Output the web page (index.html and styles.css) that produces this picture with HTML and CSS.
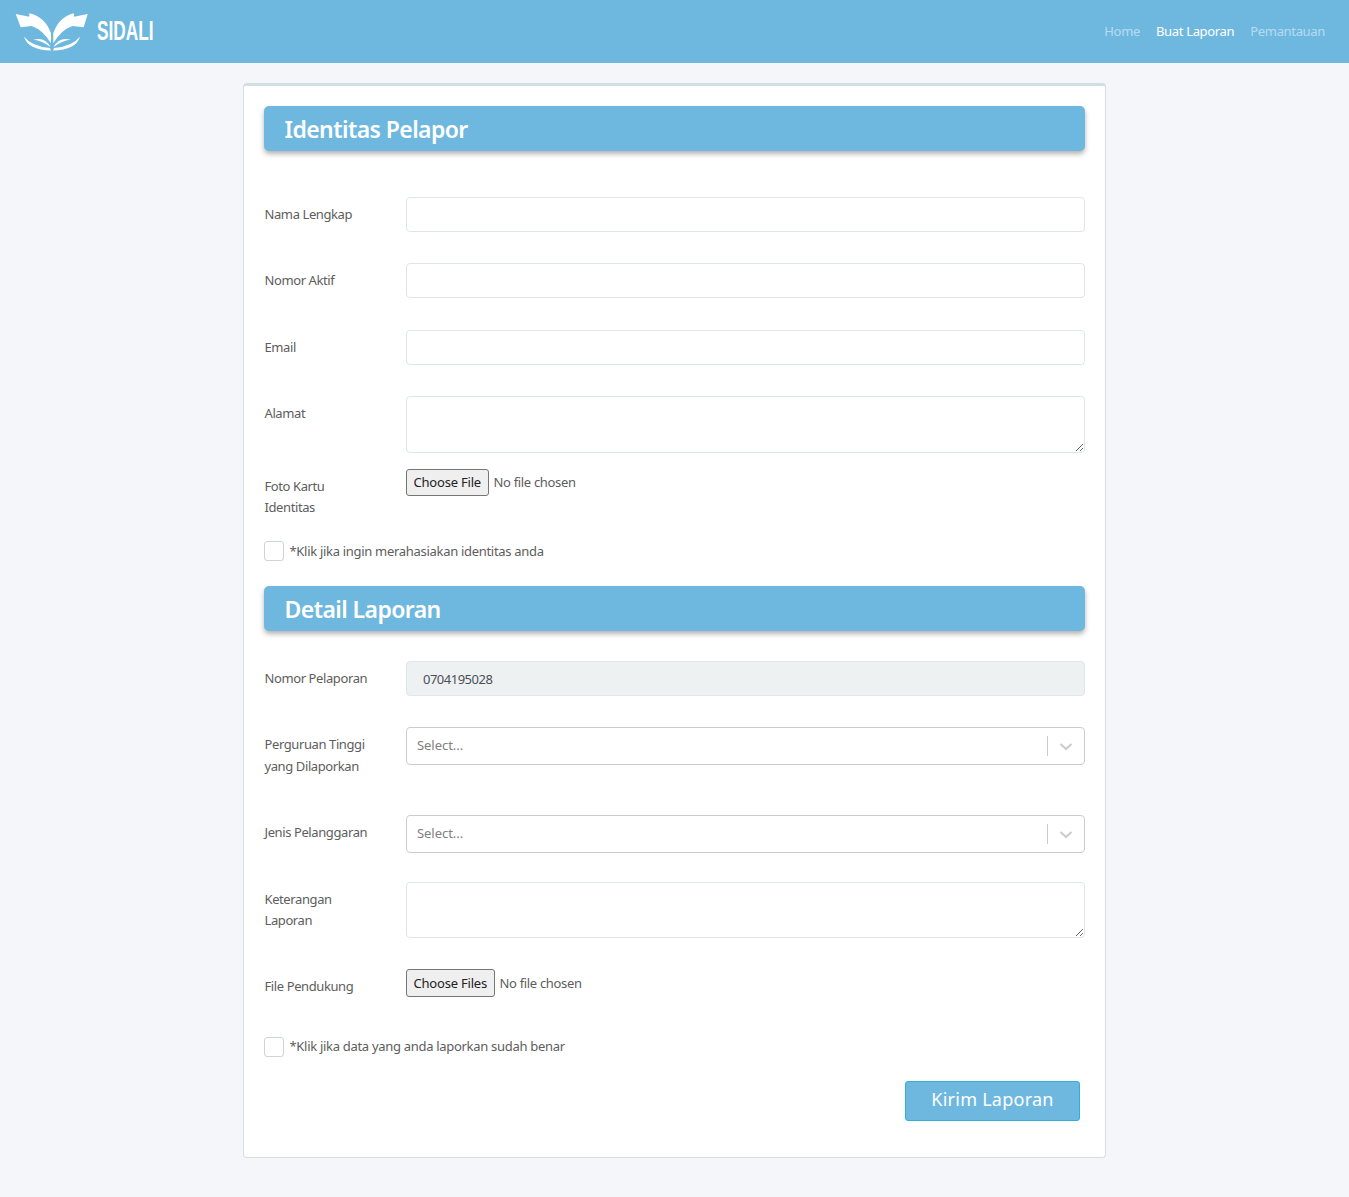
FILE: index.html
```html
<!DOCTYPE html>
<html lang="id">
<head>
<meta charset="utf-8">
<title>SIDALI</title>
<link rel="stylesheet" href="styles.css">
</head>
<body>
<nav class="navbar">
  <a class="brand" href="#">
    <svg class="logo" width="75" height="40" viewBox="0 0 75 40" aria-hidden="true">
      <g fill="#fff">
        <path d="M.7 2 L14.3 4.7 L14.3 1.3 Q30 4.7 36 21.3 L36 31.3 Q28 18 16.7 14 L5.7 15.3 Z"/>
        <path d="M72.7 2 L59 4.7 L59 1.3 Q44 4.7 38.3 21.3 L38.3 31.3 Q46 18 57.5 14 L68.7 15.3 Z"/>
        <path d="M9 24.7 Q17 34.5 35 36 L36 38.4 Q13 38 9 24.7 Z"/>
        <path d="M18.3 27.6 Q30 24.5 35.5 35 Q27 29 18.3 27.6 Z"/>
        <path d="M65 24.7 Q57 34.5 39 36 L38 38.4 Q61 38 65 24.7 Z"/>
        <path d="M55.7 27.6 Q44 24.5 38.5 35 Q47 29 55.7 27.6 Z"/>
      </g>
    </svg>
    <span class="brand-name">SIDALI</span>
  </a>
  <ul class="nav-links">
    <li><a class="nav-link" href="#">Home</a></li>
    <li><a class="nav-link active" href="#">Buat Laporan</a></li>
    <li><a class="nav-link" href="#">Pemantauan</a></li>
  </ul>
</nav>
<main class="page">
  <form class="card">
    <h2 class="section-title first">Identitas Pelapor</h2>
    <div class="row r-input"><label class="label">Nama Lengkap</label><input class="control" type="text"></div>
    <div class="row r-input"><label class="label">Nomor Aktif</label><input class="control" type="text"></div>
    <div class="row r-input"><label class="label">Email</label><input class="control" type="text"></div>
    <div class="row r-area"><label class="label">Alamat</label><textarea class="control area"></textarea></div>
    <div class="row r-file"><label class="label">Foto Kartu<br>Identitas</label><input class="file" type="file"></div>
    <label class="check c-one"><input class="box" type="checkbox"><span>*Klik jika ingin merahasiakan identitas anda</span></label>
    <h2 class="section-title second">Detail Laporan</h2>
    <div class="row r-input"><label class="label">Nomor Pelaporan</label><input class="control readonly" type="text" value="0704195028" readonly></div>
    <div class="row r-select-a"><label class="label">Perguruan Tinggi<br>yang Dilaporkan</label>
      <div class="select"><span class="placeholder">Select...</span><span class="sep"></span><svg class="chev" width="20" height="20" viewBox="0 0 20 20" aria-hidden="true"><path d="M4.5 8 L10 13 L15.5 8" fill="none" stroke="#ccc" stroke-width="2.2"/></svg></div></div>
    <div class="row r-select-b"><label class="label">Jenis Pelanggaran</label>
      <div class="select"><span class="placeholder">Select...</span><span class="sep"></span><svg class="chev" width="20" height="20" viewBox="0 0 20 20" aria-hidden="true"><path d="M4.5 8 L10 13 L15.5 8" fill="none" stroke="#ccc" stroke-width="2.2"/></svg></div></div>
    <div class="row r-area2"><label class="label">Keterangan<br>Laporan</label><textarea class="control area2"></textarea></div>
    <div class="row r-file2"><label class="label">File Pendukung</label><input class="file file-tall" type="file" multiple></div>
    <label class="check c-two"><input class="box" type="checkbox"><span>*Klik jika data yang anda laporkan sudah benar</span></label>
    <div class="actions"><button class="submit" type="button">Kirim Laporan</button></div>
  </form>
</main>
</body>
</html>
```
FILE: styles.css
```css
* { box-sizing: border-box; }
html, body { margin: 0; padding: 0; }
body {
  background: #f4f6f9;
  font-family: "Noto Sans", "Open Sans", sans-serif;
  font-size: 13px;
  line-height: 21px;
  letter-spacing: -.33px;
  color: #5d5d5d;
  min-height: 1197px;
}
.navbar {
  height: 63px;
  background: #6eb8e0;
  display: flex;
  align-items: center;
  justify-content: space-between;
  padding: 0 16px 0 15px;
}
.brand { display: flex; align-items: center; gap: 7px; color: #fff; text-decoration: none; }
.logo { display: block; }
.brand-name {
  font-family: "Liberation Sans", sans-serif;
  font-size: 27px;
  line-height: 27px;
  font-weight: 700;
  letter-spacing: 0;
  display: inline-block;
  transform: scaleX(.64);
  transform-origin: left center;
}
.nav-links { display: flex; list-style: none; margin: 0; padding: 0; }
.nav-link { display: block; padding: 0 8px; color: rgba(255,255,255,.5); text-decoration: none; }
.nav-link.active { color: #fff; }
.page { padding-top: 20px; display: flex; justify-content: center; }
.card {
  width: 863px;
  height: 1075px;
  background: #fff;
  border: 1px solid #d8dde2;
  border-top: 3px solid #d2dee5;
  border-radius: 4px;
  padding: 20px 20px 0;
}
.section-title {
  margin: 0;
  height: 45px;
  background: #6eb8e0;
  color: #fff;
  border-radius: 5px;
  box-shadow: 0 3px 5px rgba(0,0,0,.3);
  padding: 0 20.5px;
  font-size: 23px;
  line-height: 47px;
  font-weight: 600;
  letter-spacing: -.58px;
}
.section-title.first { margin-bottom: 46px; }
.section-title.second { margin-bottom: 30px; }
.row { display: flex; align-items: flex-start; }
.label { width: 142px; flex: none; padding: 7px 0 0 .5px; letter-spacing: -.4px; }
.control {
  flex: 1;
  height: 35px;
  display: block;
  border: 1px solid #dee6ea;
  border-radius: 4px;
  background: #fff;
  padding: 1px 16px 0;
  font: inherit;
  letter-spacing: -.5px;
  color: #495057;
}
.area { height: 57px; }
.area2 { height: 56px; }
.readonly { background: #eef1f2; }
.r-input { margin-bottom: 31.33px; }
.r-area { margin-bottom: 16px; }
.r-file { height: 56px; margin-bottom: 16px; }
.file { font: inherit; letter-spacing: -.33px; color: #5d5d5d; flex: 1; }
.file::file-selector-button {
  font: inherit;
  letter-spacing: -.2px;
  color: #222;
  height: 27px;
  padding: 0 6.5px;
  margin-right: 5px;
  background: #efefef;
  border: 1px solid #767676;
  border-radius: 3px;
}
.file-tall::file-selector-button { height: 28px; }
.check { display: flex; align-items: center; gap: 5.5px; letter-spacing: -.3px; }
.box {
  appearance: none;
  width: 20px;
  height: 20px;
  margin: 0;
  background: #fff;
  border: 1px solid #ced4da;
  border-radius: 3px;
}
.c-one { margin-bottom: 24px; }
.r-select-a { height: 88px; }
.r-select-a .label { line-height: 21.5px; }
.r-select-b { height: 67px; }
.select {
  flex: 1;
  height: 38px;
  border: 1px solid #ccc;
  border-radius: 4px;
  background: #fff;
  display: flex;
  align-items: center;
  padding: 0 8px 0 10px;
}
.placeholder { flex: 1; color: #808080; letter-spacing: -.05px; margin-top: -2px; }
.sep { width: 1px; height: 20px; background: #ccc; margin-right: 8px; }
.chev { display: block; }
.r-area2 { margin-bottom: 31px; }
.r-file2 { height: 67px; }
.c-two { margin-bottom: 24px; }
.actions { display: flex; justify-content: flex-end; padding-right: 5px; }
.submit {
  width: 175px;
  height: 40px;
  padding: 0 0 5px;
  background: #6eb8e0;
  color: #fff;
  border: 1px solid #2cb0dc;
  border-radius: 3px;
  font-family: inherit;
  font-size: 18px;
  letter-spacing: .25px;
}
```
